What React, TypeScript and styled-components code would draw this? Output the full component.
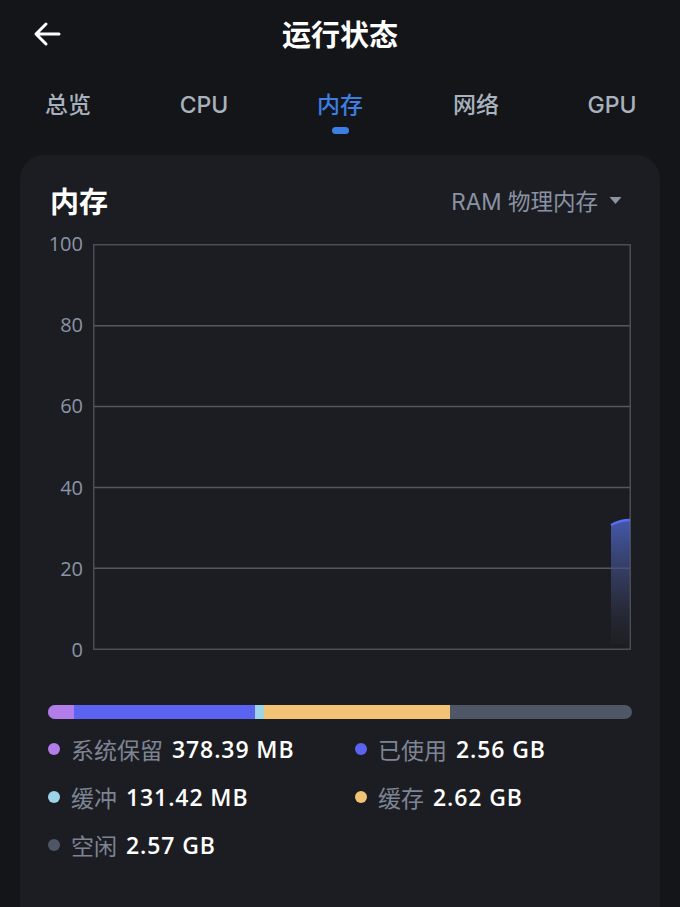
import React from "react";
import styled, { createGlobalStyle } from "styled-components";

const Global = createGlobalStyle`
  html, body { margin: 0; padding: 0; background: #131519; }
  body { font-family: "Open Sans", "Noto Sans CJK SC", sans-serif; color: #fff; }
  * { box-sizing: border-box; }
`;

const Page = styled.div`
  width: 680px;
  height: 907px;
  overflow: hidden;
  background: #131519;
  display: flex;
  flex-direction: column;
`;

const Header = styled.div`
  height: 68px;
  display: grid;
  grid-template-columns: 80px 1fr 80px;
  align-items: center;
`;

const BackBtn = styled.div`
  padding-left: 32px;
  display: flex;
  align-items: center;
  height: 100%;
`;

const Title = styled.h1`
  margin: 0;
  text-align: center;
  font-size: 29px;
  font-weight: 700;
  color: #fff;
  line-height: 1;
`;

const Tabs = styled.div`
  display: grid;
  grid-template-columns: repeat(5, 1fr);
  height: 87px;
`;

const Tab = styled.div<{ $active?: boolean }>`
  display: flex;
  flex-direction: column;
  align-items: center;
  padding-top: 22px;
  font-family: "Inter", "Noto Sans CJK SC", sans-serif;
  font-size: 23px;
  line-height: 30px;
  font-weight: 500;
  color: ${(p) => (p.$active ? "#3d7ee4" : "#a9b1be")};
`;

const Indicator = styled.div`
  margin-top: 7px;
  width: 17px;
  height: 7px;
  border-radius: 4px;
  background: #3d7ee4;
`;

const Card = styled.div`
  margin: 0 20px;
  flex: 1;
  background: #1c1d22;
  border-radius: 24px 24px 0 0;
  padding: 27px 28px 0 28px;
  display: flex;
  flex-direction: column;
`;

const CardHead = styled.div`
  display: flex;
  justify-content: space-between;
  align-items: center;
  height: 36px;
  padding-left: 2px;
`;

const CardTitle = styled.div`
  font-size: 29px;
  font-weight: 700;
  color: #fff;
`;

const Selector = styled.div`
  display: flex;
  align-items: center;
  gap: 11px;
  font-family: "Inter", "Noto Sans CJK SC", sans-serif;
  font-size: 22.5px;
  color: #8a93a3;
  padding-right: 10px;
`;

const ChartWrap = styled.div`
  margin-top: 16px;
  height: 426px;
  display: grid;
  grid-template-columns: 35px 538px;
  column-gap: 10px;
`;

const YAxis = styled.div`
  display: flex;
  flex-direction: column;
  justify-content: space-between;
  align-items: flex-end;
`;

const YLabel = styled.span`
  height: 20px;
  line-height: 20px;
  font-size: 20px;
  color: #8b94a5;
`;

const Plot = styled.div`
  padding: 10px 0;
`;

const Bar = styled.div`
  margin-top: 45px;
  height: 14px;
  border-radius: 7px;
  overflow: hidden;
  display: flex;
  background: #4f5666;
`;

const Seg = styled.div<{ $c: string }>`
  height: 100%;
  background: ${(p) => p.$c};
`;

const Legend = styled.div`
  margin-top: 14px;
  display: grid;
  grid-template-columns: 307px 1fr;
  row-gap: 16px;
`;

const Item = styled.div`
  display: flex;
  align-items: center;
  height: 32px;
  font-size: 23px;
  white-space: nowrap;
`;

const Dot = styled.span<{ $c: string }>`
  width: 12px;
  height: 12px;
  border-radius: 50%;
  background: ${(p) => p.$c};
  margin-right: 11px;
  flex-shrink: 0;
`;

const Label = styled.span`
  color: #7d8594;
  margin-right: 9px;
`;

const Value = styled.span`
  color: #fff;
  font-weight: 600;
  letter-spacing: 0.9px;
`;

const segs = [
  { c: "#b27ce9", w: 26 },
  { c: "#5a64f0", w: 181 },
  { c: "#9dd3e6", w: 9 },
  { c: "#f1c374", w: 186 },
];

const legend = [
  { c: "#b27ce9", l: "系统保留", v: "378.39 MB" },
  { c: "#5a64f0", l: "已使用", v: "2.56 GB" },
  { c: "#9dd3e6", l: "缓冲", v: "131.42 MB" },
  { c: "#f1c374", l: "缓存", v: "2.62 GB" },
  { c: "#4f5666", l: "空闲", v: "2.57 GB" },
];

const ticks = [100, 80, 60, 40, 20, 0];

function Chart() {
  const w = 538;
  const h = 406;
  const y = (v: number) => h - (v / 100) * (h - 1.5) - 0.75;
  return (
    <svg width={w} height={h} viewBox={`0 0 ${w} ${h}`} style={{ display: "block" }}>
      <defs>
        <linearGradient id="ag" x1="0" y1="0" x2="0" y2="1">
          <stop offset="0" stopColor="#4b63c4" stopOpacity="0.85" />
          <stop offset="0.5" stopColor="#3f4a78" stopOpacity="0.6" />
          <stop offset="1" stopColor="#2a2c33" stopOpacity="0.2" />
        </linearGradient>
      </defs>
      {ticks.map((t) => (
        <line
          key={t}
          x1={0}
          x2={w}
          y1={y(t)}
          y2={y(t)}
          stroke={t === 0 || t === 100 ? "#4b4d53" : "#56585e"}
          strokeWidth="1.5"
        />
      ))}
      <line x1={0.75} x2={0.75} y1={0} y2={h} stroke="#4b4d53" strokeWidth="1.5" />
      <line x1={w - 0.75} x2={w - 0.75} y1={0} y2={h} stroke="#4b4d53" strokeWidth="1.5" />
      <path d="M518 281 Q527 276 537 276 L537 400 L518 400 Z" fill="url(#ag)" />
      <path d="M518 281 Q527 276 537 276" fill="none" stroke="#5a6cf2" strokeWidth="2.5" />
    </svg>
  );
}

export default function App() {
  return (
    <Page>
      <Global />
      <Header>
        <BackBtn>
          <svg width="30" height="30" viewBox="0 0 30 30">
            <path
              d="M27 15 H5 M14 5 L4 15 L14 25"
              fill="none"
              stroke="#fff"
              strokeWidth="3"
              strokeLinecap="round"
              strokeLinejoin="round"
            />
          </svg>
        </BackBtn>
        <Title>运行状态</Title>
        <div />
      </Header>
      <Tabs>
        <Tab>总览</Tab>
        <Tab>CPU</Tab>
        <Tab $active>
          内存
          <Indicator />
        </Tab>
        <Tab>网络</Tab>
        <Tab>GPU</Tab>
      </Tabs>
      <Card>
        <CardHead>
          <CardTitle>内存</CardTitle>
          <Selector>
            RAM 物理内存
            <svg width="13" height="9" viewBox="0 0 13 9">
              <path d="M0.5 1 H12.5 L6.5 8 Z" fill="#8a93a3" />
            </svg>
          </Selector>
        </CardHead>
        <ChartWrap>
          <YAxis>
            {ticks.map((t) => (
              <YLabel key={t}>{t}</YLabel>
            ))}
          </YAxis>
          <Plot>
            <Chart />
          </Plot>
        </ChartWrap>
        <Bar>
          {segs.map((s, i) => (
            <Seg key={i} $c={s.c} style={{ width: s.w }} />
          ))}
        </Bar>
        <Legend>
          {legend.map((it) => (
            <Item key={it.l}>
              <Dot $c={it.c} />
              <Label>{it.l}</Label>
              <Value>{it.v}</Value>
            </Item>
          ))}
        </Legend>
      </Card>
    </Page>
  );
}
